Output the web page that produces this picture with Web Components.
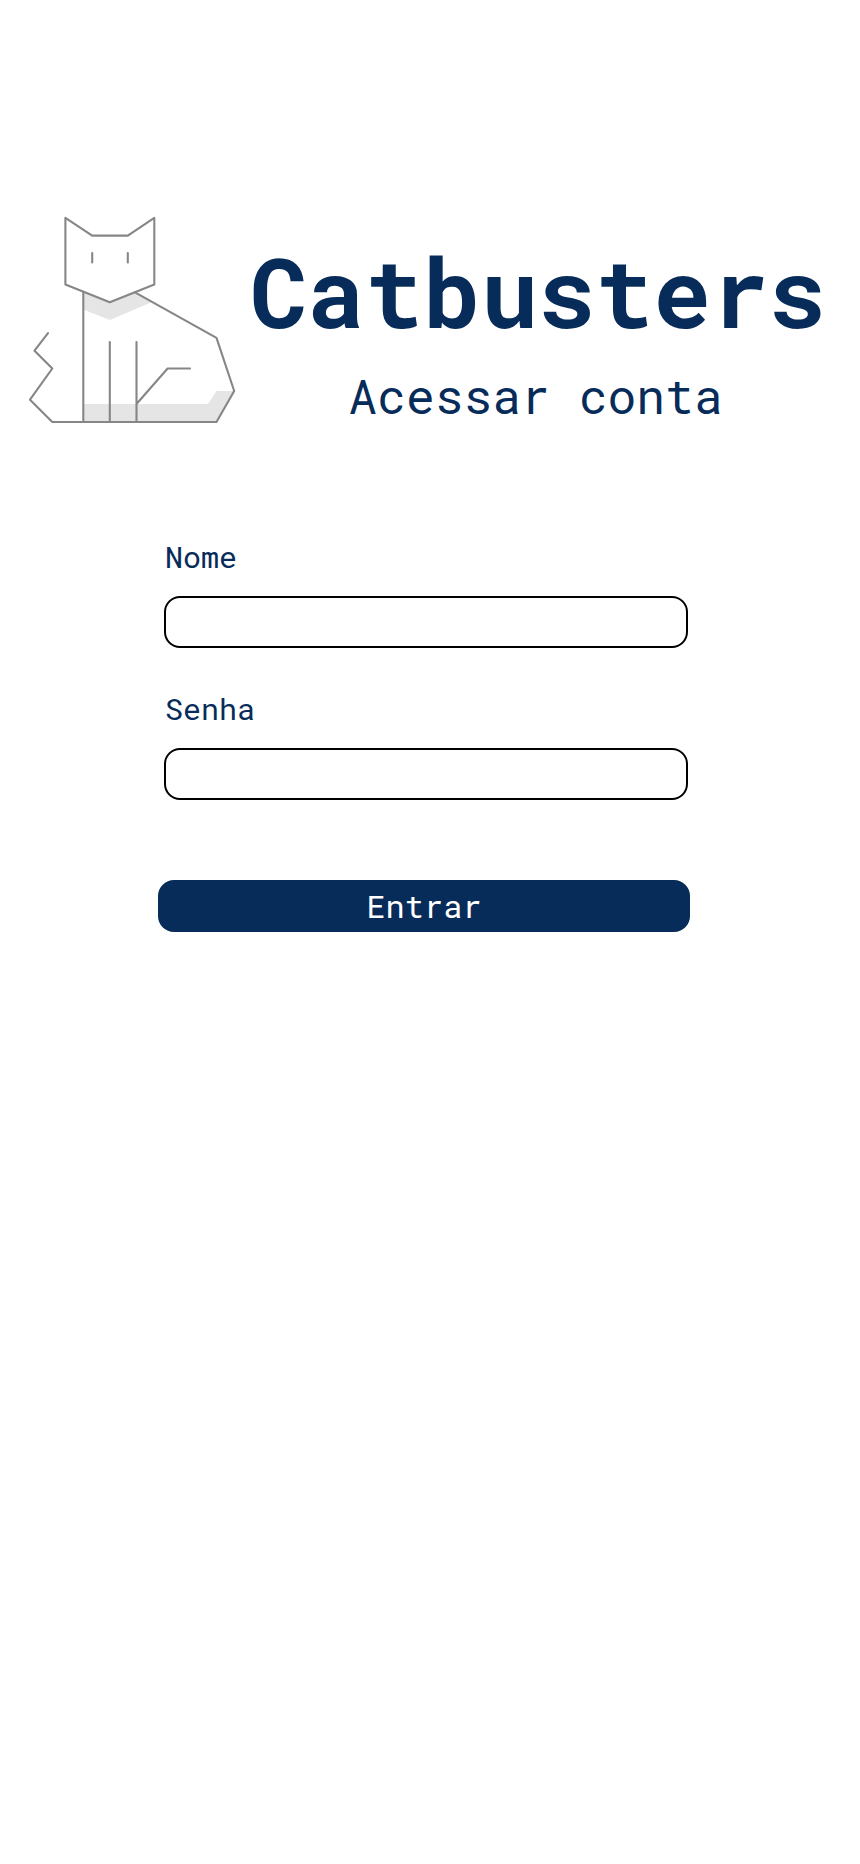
<!DOCTYPE html>
<html lang="pt-BR">
<head>
<meta charset="utf-8">
<title>Catbusters</title>
<style>
body { margin: 0; background: #fff; color: #082c59; font-family: "Roboto Mono", "DejaVu Sans Mono", monospace; }
</style>
</head>
<body>
<login-page></login-page>
<script>
const define = (name, html) => customElements.define(name, class extends HTMLElement {
  constructor() {
    super();
    const t = document.createElement('template');
    t.innerHTML = html;
    this.attachShadow({ mode: 'open' }).append(t.content.cloneNode(true));
  }
});

define('cat-logo', `
<style>:host { display: block; width: 240px; height: 230px; flex: none; } svg { display: block; }</style>
<svg width="240" height="230" viewBox="0 205 240 230" fill="none" stroke="#868686" stroke-width="2.1" stroke-linecap="round" stroke-linejoin="round">
  <path stroke="none" fill="#e5e5e5" d="M83.3 291.5L109.8 302.3L135 292.3L152 302L109.8 320L83.3 309.5ZM83.3 404H208L216.5 391H234L216.5 422H83.3Z"/>
  <path d="M65.4 217.8L92.2 235.6H127.8L154.3 217.8V284.5L109.8 302.3L65.4 284.5ZM92.2 253V262.5M127.8 253V262.5"/>
  <path d="M83.3 292V422M135 292.3L216.5 337.8L234.2 391L216.5 422H52.3L30 399.7L52.3 368.5L34.5 350.7L48 333.2M109.8 342V422M136.5 342V422M136.5 404L167.6 368.5H190"/>
</svg>`);

define('brand-header', `
<style>
:host { display: flex; padding-top: 205px; }
.text { width: 596px; display: flex; flex-direction: column; align-items: center; padding-top: 23px; box-sizing: border-box; }
h1 { margin: 0; font-size: 96px; line-height: 126px; font-weight: 700; }
p { margin: 10px 5px 0 0; font-size: 48px; line-height: 63px; white-space: pre; }
</style>
<cat-logo></cat-logo>
<div class="text"><h1><slot name="title"></slot></h1><p><slot name="subtitle"></slot></p></div>`);

define('form-field', `
<style>
:host { display: block; height: 152px; }
label { display: block; font-size: 30px; line-height: 40px; padding-left: 1px; margin-bottom: 19px; }
input { display: block; box-sizing: border-box; width: 524px; height: 52px; margin: 0; padding: 0 16px; border: 2px solid #000; border-radius: 16px; background: #fff; font: inherit; outline: none; }
</style>
<label for="f"><slot></slot></label><input id="f">`);

define('submit-button', `
<style>
:host { display: block; }
button { display: block; width: 532px; height: 52px; margin: 0; padding: 0; border: 0; border-radius: 16px; background: #082c59; color: #fff; font: 32px/52px "Roboto Mono", "DejaVu Sans Mono", monospace; }
</style>
<button type="button"><slot></slot></button>`);

define('login-page', `
<style>
:host { display: block; height: 1864px; overflow: hidden; }
form { margin: 0; padding: 102px 0 0 164px; }
submit-button { margin: 39px 0 0 -6px; }
</style>
<brand-header><span slot="title">Catbusters</span><span slot="subtitle">Acessar conta</span></brand-header>
<form><form-field>Nome</form-field><form-field>Senha</form-field><submit-button>Entrar</submit-button></form>`);
</script>
</body>
</html>
